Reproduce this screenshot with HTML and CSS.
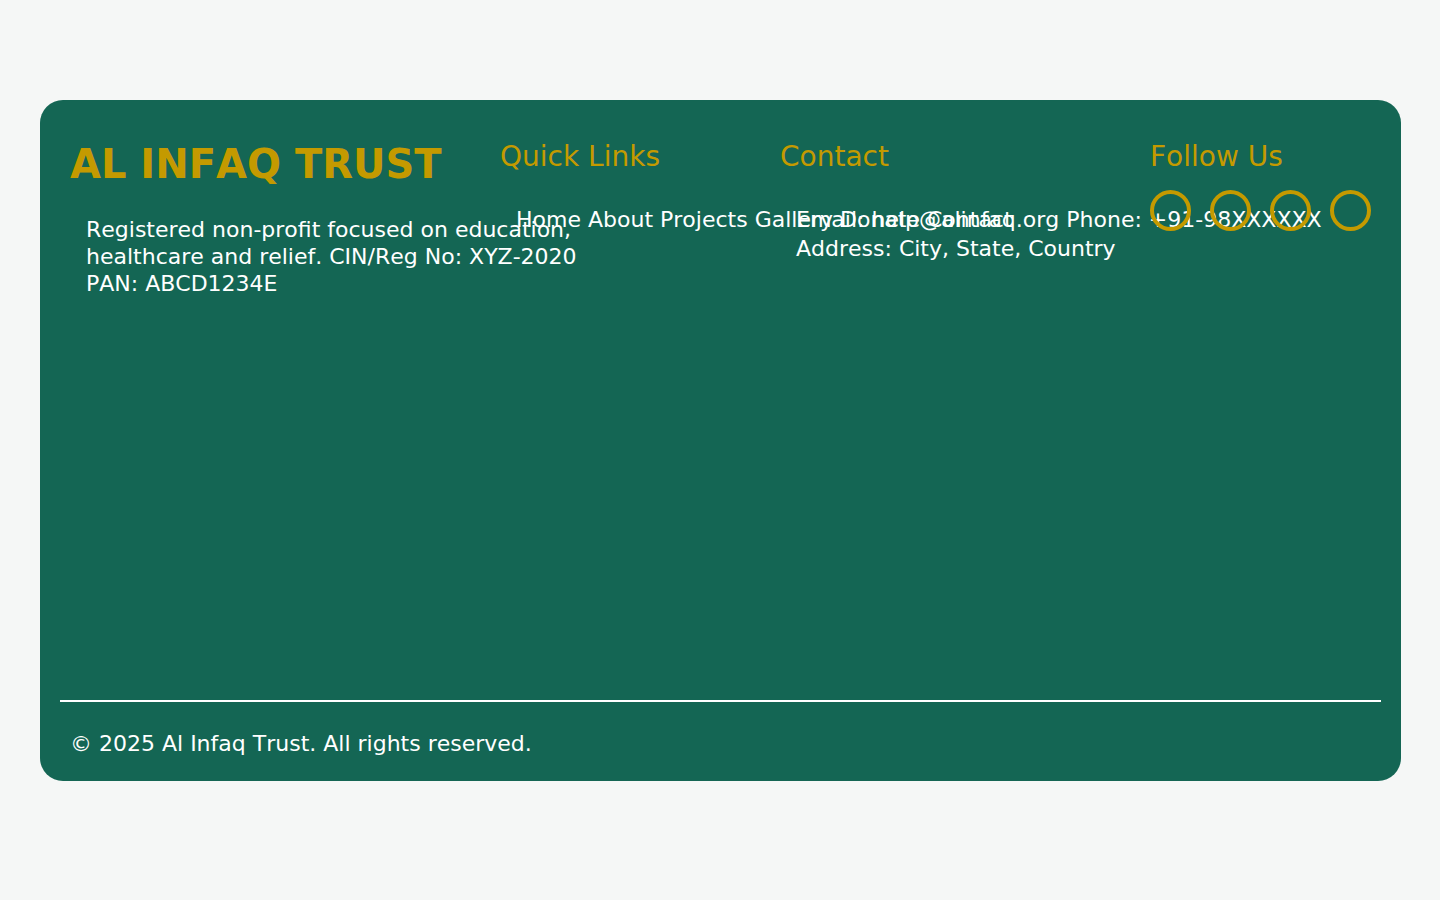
FILE: index.html
```html
<!DOCTYPE html>
<html lang="en">
<head>
<meta charset="utf-8">
<meta name="viewport" content="width=device-width, initial-scale=1">
<title>Al Infaq Trust</title>
<link rel="stylesheet" href="styles.css">
</head>
<body>
<footer class="card">
  <div class="columns">
    <section class="brand">
      <h1 class="title">AL INFAQ TRUST</h1>
      <p class="about">Registered non-profit focused on education,<br>healthcare and relief. CIN/Reg No: XYZ-2020<br>PAN: ABCD1234E</p>
    </section>
    <section>
      <h2 class="heading">Quick Links</h2>
      <nav class="details">
        <a href="#home">Home</a>
        <a href="#about">About</a>
        <a href="#projects">Projects</a>
        <a href="#gallery">Gallery</a>
        <a href="#donate">Donate</a>
        <a href="#contact">Contact</a>
      </nav>
    </section>
    <section>
      <h2 class="heading">Contact</h2>
      <address class="details">Email: help@alinfaq.org Phone: +91-98XXXXXX<br>Address: City, State, Country</address>
    </section>
    <section>
      <h2 class="heading">Follow Us</h2>
      <div class="social">
        <a class="circle" href="#facebook" aria-label="Facebook"></a>
        <a class="circle" href="#twitter" aria-label="Twitter"></a>
        <a class="circle" href="#instagram" aria-label="Instagram"></a>
        <a class="circle" href="#youtube" aria-label="YouTube"></a>
      </div>
    </section>
  </div>
  <p class="copyright">© 2025 Al Infaq Trust. All rights reserved.</p>
</footer>
</body>
</html>
```
FILE: styles.css
```css
* {
  box-sizing: border-box;
}

body {
  margin: 0;
  padding: 100px 39px 119px 40px;
  background: #f5f7f6;
  color: #fff;
  font-family: "DejaVu Sans", sans-serif;
  font-size: 22px;
  font-kerning: none;
}

h1, h2, p {
  margin: 0;
}

a {
  color: inherit;
  text-decoration: none;
}

.card {
  display: flex;
  flex-direction: column;
  justify-content: space-between;
  min-height: calc(100vh - 219px);
  padding: 40px 20px 24px;
  border-radius: 23px;
  background: #146654;
}

.columns {
  display: grid;
  grid-template-columns: 430fr 280fr 370fr 221fr;
  padding: 0 10px;
}

.columns > section {
  min-width: 0;
  white-space: nowrap;
}

.title {
  color: #c49a00;
  font-size: 40px;
  line-height: 48px;
}

.about {
  margin: 28px 0 0 16px;
  line-height: 27px;
}

.heading {
  color: #c49a00;
  font-size: 28px;
  font-weight: 400;
  line-height: 34px;
}

.details {
  margin: 31px 0 0 16px;
  font-style: normal;
  line-height: 29px;
}

.social {
  display: flex;
  justify-content: space-between;
  margin-top: 16px;
}

.circle {
  width: 41px;
  height: 41px;
  border: 4px solid #c49a00;
  border-radius: 50%;
}

.copyright {
  padding: 28px 10px 0;
  border-top: 2px solid #fff;
  line-height: 27px;
}
```
